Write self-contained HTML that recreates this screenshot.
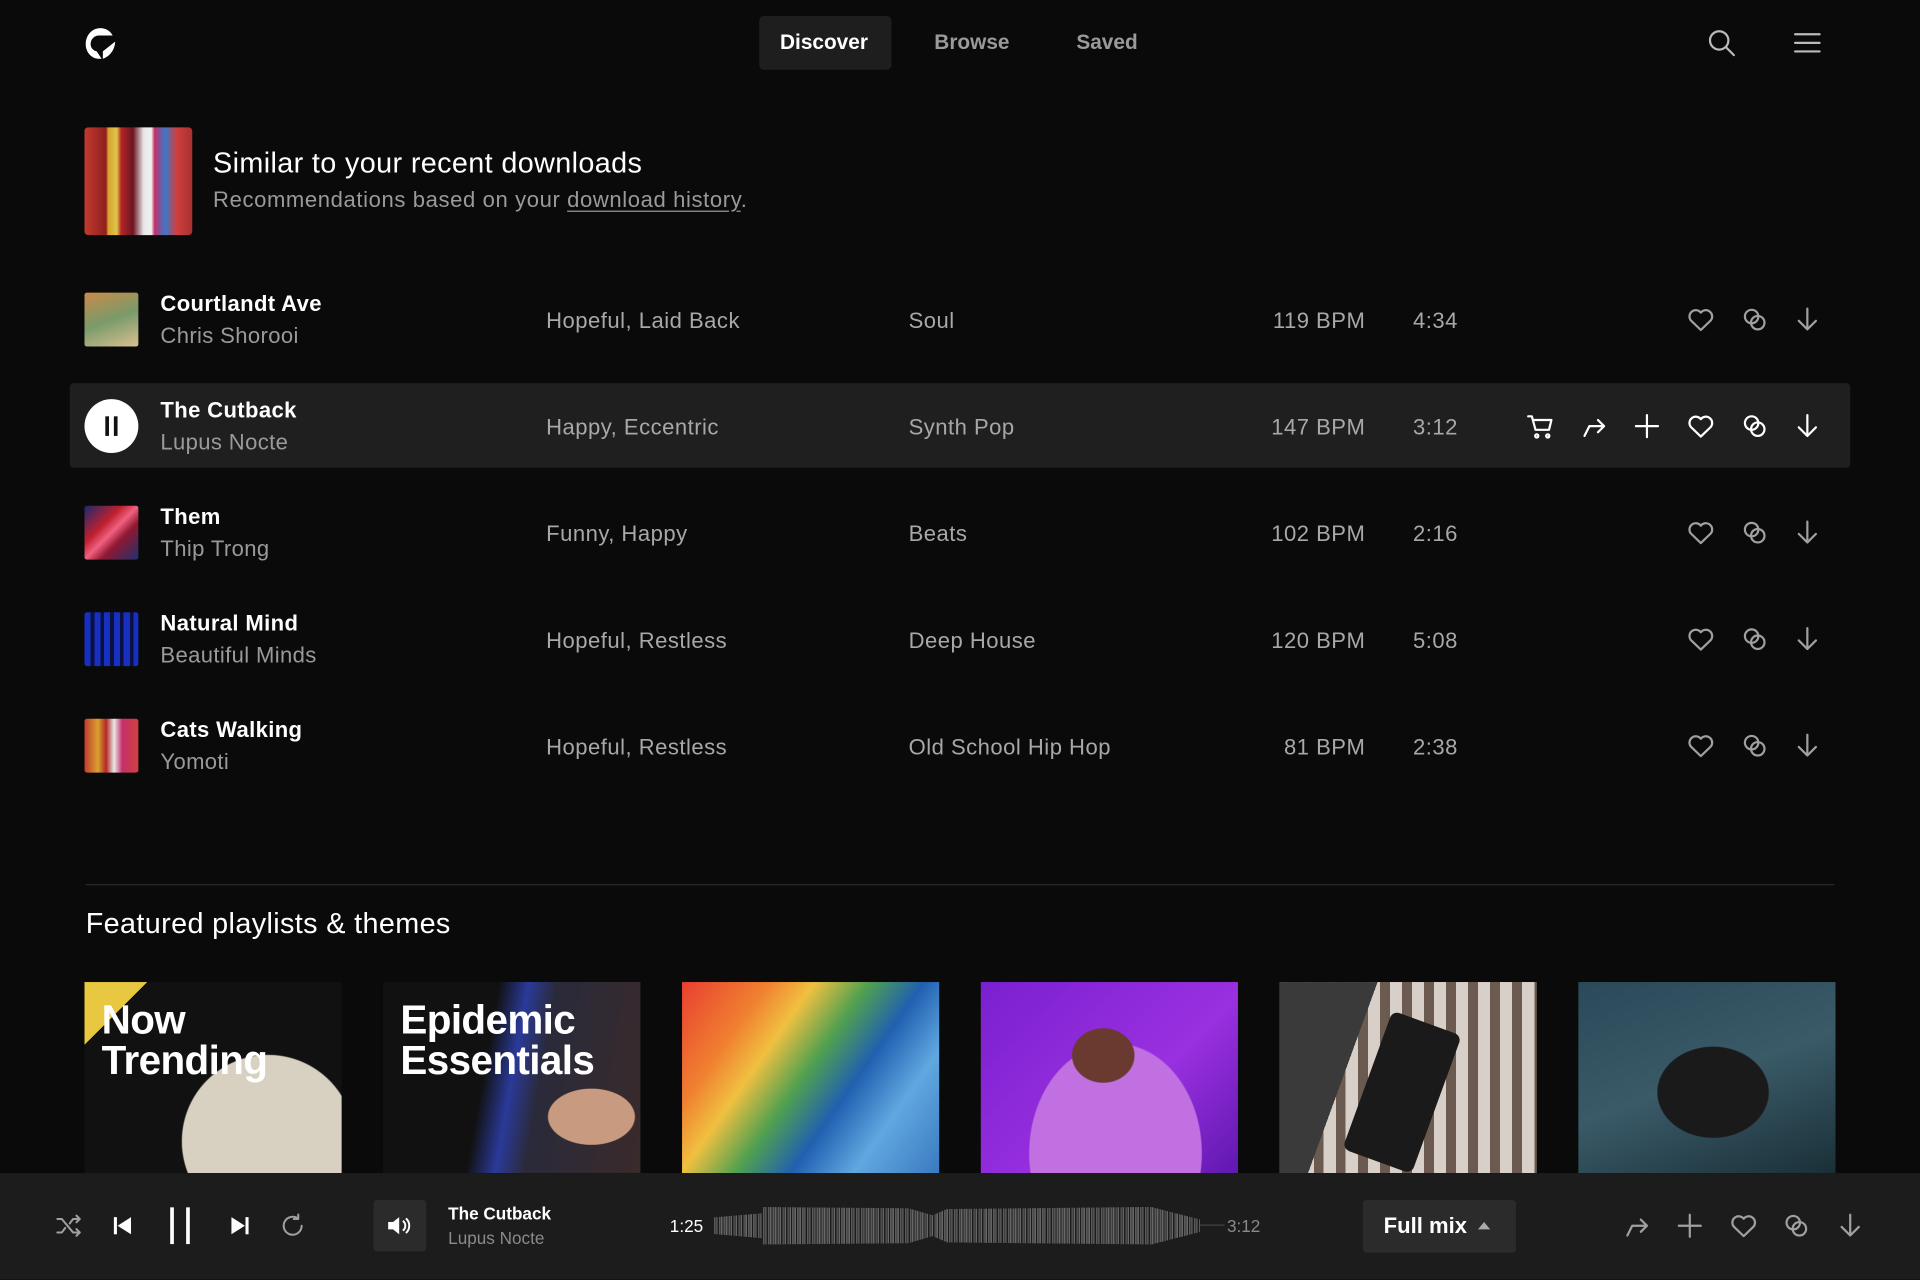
<!DOCTYPE html>
<html><head><meta charset="utf-8"><style>
html,body{margin:0;padding:0;background:#0a0a0a;width:1920px;height:1280px;overflow:hidden}
#w{position:absolute;left:0;top:0;width:1568px;height:1045px;transform:scale(1.22449);transform-origin:0 0;font-family:"Liberation Sans",sans-serif;color:#fff}
.a{position:absolute}
.nav{font-size:17px;font-weight:bold;color:#9a9a9a}
.t1{font-size:18px;font-weight:bold;color:#fff;letter-spacing:0.3px}
.t2{font-size:18px;color:#9a9a9a;letter-spacing:0.3px}
.g{font-size:18px;color:#a8a8a8;letter-spacing:0.4px;margin-top:1px}
svg.i{position:absolute;fill:none;stroke:#a0a0a0;stroke-width:1.8;stroke-linecap:round;stroke-linejoin:round}
.hl svg.i{stroke:#fff}
.thumb{position:absolute;left:69px;width:44px;height:44px;border-radius:2px}
.tile{position:absolute;top:802px;width:210px;height:156px;overflow:hidden}
.tile span{position:absolute;left:14px;top:14px;font-size:33px;font-weight:bold;line-height:33px;color:#fff;letter-spacing:-0.5px}
</style></head><body><div id="w">
<svg style="display:none"><defs>
<symbol id="heart" viewBox="0 0 24 24"><path d="M12 20.5 3.8 12.6A5 5 0 0 1 12 6.3a5 5 0 0 1 8.2 6.3Z"/></symbol>
<symbol id="link" viewBox="0 0 24 24"><circle cx="9.5" cy="9.5" r="5.5"/><circle cx="14.5" cy="14.5" r="5.5"/></symbol>
<symbol id="down" viewBox="0 0 24 24"><path d="M12 3v17M5 13l7 7 7-7"/></symbol>
<symbol id="plus" viewBox="0 0 24 24"><path d="M12 3v18M3 12h18"/></symbol>
<symbol id="share" viewBox="0 0 24 24"><path d="M4 20 8 12h12M15 7l5 5-5 5"/></symbol>
<symbol id="cart" viewBox="0 0 24 24"><path d="M2 4h3l3 11h11l2-8H7"/><circle cx="9" cy="20" r="1.3"/><circle cx="18" cy="20" r="1.3"/></symbol>
</defs></svg>

<!-- header -->
<svg class="a" style="left:69px;top:22px" width="26" height="27" viewBox="0 0 26 27"><path d="M13 1C6 1 1 7 1 14s5 12 11 12h2l-4-6c-3-1-5-3-5-6 0-4 3-7 7-7h11C21 3 17 1 13 1Z M15 20l10-8c0 6-4 12-10 14Z" fill="#fff"/></svg>
<div class="a" style="left:620px;top:13px;width:108px;height:44px;background:#1e1e1e;border-radius:4px"></div>
<div class="a nav" style="left:637px;top:25px;color:#fff">Discover</div>
<div class="a nav" style="left:763px;top:25px">Browse</div>
<div class="a nav" style="left:879px;top:25px">Saved</div>
<svg class="i" style="left:1394px;top:23px;stroke:#bbb" width="24" height="24" viewBox="0 0 24 24"><circle cx="10" cy="10" r="7.5"/><path d="M15.5 15.5 22 22"/></svg>
<svg class="i" style="left:1464px;top:23px;stroke:#bbb" width="24" height="24" viewBox="0 0 24 24"><path d="M2 5h20M2 12h20M2 19h20"/></svg>

<!-- hero -->
<div class="a" style="left:69px;top:104px;width:88px;height:88px;border-radius:3px;background:linear-gradient(90deg,#c23a2e 0,#8f1f1f 20%,#d8a32e 22%,#e0c44a 30%,#b42626 34%,#6a1522 45%,#e8e8e8 55%,#f0f0f0 62%,#c4306a 65%,#3a78c8 75%,#d04040 85%,#a83030 100%)"></div>
<div class="a" style="left:174px;top:120px;font-size:23.5px;color:#fff;letter-spacing:0.3px">Similar to your recent downloads</div>
<div class="a" style="left:174px;top:153px;font-size:18px;color:#9a9a9a;letter-spacing:0.5px">Recommendations based on your <span style="text-decoration:underline;text-underline-offset:3px">download history</span>.</div>

<!-- rows -->
<div class="a hl" style="left:57px;top:313px;width:1454px;height:69px;background:#1f1f1f;border-radius:3px"></div>

<div class="thumb" style="top:239px;background:linear-gradient(160deg,#c98a4a,#7a9a6a 50%,#d8c090)"></div>
<div class="a t1" style="left:131px;top:238px">Courtlandt Ave</div><div class="a t2" style="left:131px;top:264px">Chris Shorooi</div>
<div class="a g" style="left:446px;top:251px">Hopeful, Laid Back</div><div class="a g" style="left:742px;top:251px">Soul</div>
<div class="a g" style="left:1000px;width:115px;text-align:right;top:251px">119 BPM</div><div class="a g" style="left:1154px;top:251px">4:34</div>

<div class="a" style="left:69px;top:326px;width:44px;height:44px;border-radius:50%;background:#fff"></div>
<div class="a" style="left:86px;top:340px;width:3px;height:16px;background:#111"></div><div class="a" style="left:93px;top:340px;width:3px;height:16px;background:#111"></div>
<div class="a t1" style="left:131px;top:325px">The Cutback</div><div class="a t2" style="left:131px;top:351px">Lupus Nocte</div>
<div class="a g" style="left:446px;top:338px">Happy, Eccentric</div><div class="a g" style="left:742px;top:338px">Synth Pop</div>
<div class="a g" style="left:1000px;width:115px;text-align:right;top:338px">147 BPM</div><div class="a g" style="left:1154px;top:338px">3:12</div>

<div class="thumb" style="top:413px;background:linear-gradient(135deg,#1a2a6a,#c02030 35%,#f06080 50%,#901830 65%,#203070)"></div>
<div class="a t1" style="left:131px;top:412px">Them</div><div class="a t2" style="left:131px;top:438px">Thip Trong</div>
<div class="a g" style="left:446px;top:425px">Funny, Happy</div><div class="a g" style="left:742px;top:425px">Beats</div>
<div class="a g" style="left:1000px;width:115px;text-align:right;top:425px">102 BPM</div><div class="a g" style="left:1154px;top:425px">2:16</div>

<div class="thumb" style="top:500px;background:repeating-linear-gradient(90deg,#1830c0 0 5px,#0a1040 5px 8px)"></div>
<div class="a t1" style="left:131px;top:499px">Natural Mind</div><div class="a t2" style="left:131px;top:525px">Beautiful Minds</div>
<div class="a g" style="left:446px;top:512px">Hopeful, Restless</div><div class="a g" style="left:742px;top:512px">Deep House</div>
<div class="a g" style="left:1000px;width:115px;text-align:right;top:512px">120 BPM</div><div class="a g" style="left:1154px;top:512px">5:08</div>

<div class="thumb" style="top:587px;background:linear-gradient(90deg,#c23a2e,#d8a32e 25%,#b42626 40%,#e8e8e8 55%,#c4306a 70%,#d04040)"></div>
<div class="a t1" style="left:131px;top:586px">Cats Walking</div><div class="a t2" style="left:131px;top:612px">Yomoti</div>
<div class="a g" style="left:446px;top:599px">Hopeful, Restless</div><div class="a g" style="left:742px;top:599px">Old School Hip Hop</div>
<div class="a g" style="left:1000px;width:115px;text-align:right;top:599px">81 BPM</div><div class="a g" style="left:1154px;top:599px">2:38</div>

<!-- row icons -->
<svg class="i" style="left:1377px;top:249px" width="24" height="24"><use href="#heart"/></svg>
<svg class="i" style="left:1421px;top:249px" width="24" height="24"><use href="#link"/></svg>
<svg class="i" style="left:1464px;top:249px" width="24" height="24"><use href="#down"/></svg>
<div class="hl">
<svg class="i" style="left:1246px;top:336px" width="24" height="24"><use href="#cart"/></svg>
<svg class="i" style="left:1290px;top:336px" width="24" height="24"><use href="#share"/></svg>
<svg class="i" style="left:1333px;top:336px" width="24" height="24"><use href="#plus"/></svg>
<svg class="i" style="left:1377px;top:336px" width="24" height="24"><use href="#heart"/></svg>
<svg class="i" style="left:1421px;top:336px" width="24" height="24"><use href="#link"/></svg>
<svg class="i" style="left:1464px;top:336px" width="24" height="24"><use href="#down"/></svg>
</div>
<svg class="i" style="left:1377px;top:423px" width="24" height="24"><use href="#heart"/></svg>
<svg class="i" style="left:1421px;top:423px" width="24" height="24"><use href="#link"/></svg>
<svg class="i" style="left:1464px;top:423px" width="24" height="24"><use href="#down"/></svg>
<svg class="i" style="left:1377px;top:510px" width="24" height="24"><use href="#heart"/></svg>
<svg class="i" style="left:1421px;top:510px" width="24" height="24"><use href="#link"/></svg>
<svg class="i" style="left:1464px;top:510px" width="24" height="24"><use href="#down"/></svg>
<svg class="i" style="left:1377px;top:597px" width="24" height="24"><use href="#heart"/></svg>
<svg class="i" style="left:1421px;top:597px" width="24" height="24"><use href="#link"/></svg>
<svg class="i" style="left:1464px;top:597px" width="24" height="24"><use href="#down"/></svg>

<!-- featured -->
<div class="a" style="left:70px;top:722px;width:1428px;height:1px;background:#2c2c2c"></div>
<div class="a" style="left:70px;top:741px;font-size:23.5px;color:#fff;letter-spacing:0.3px">Featured playlists &amp; themes</div>
<div class="tile" style="left:69px;background:radial-gradient(circle at 150px 130px,#d8d0c0 0 70px,transparent 71px),linear-gradient(135deg,#e8c840 0 14%,#111 14%)"><span>Now<br>Trending</span></div>
<div class="tile" style="left:313px;background:radial-gradient(ellipse at 170px 110px,#c89a80 0 35px,transparent 36px),linear-gradient(100deg,#111 0 40%,#2a3a9a 50%,#2a2a3a 60%,#3a2a2a 100%),#111"><span style="top:14px">Epidemic<br>Essentials</span></div>
<div class="tile" style="left:557px;background:linear-gradient(125deg,#e84030 0,#f08030 22%,#f0c040 34%,#50a050 48%,#2060b0 62%,#60a8e0 78%,#3a7ac0 100%)"></div>
<div class="tile" style="left:801px;background:radial-gradient(ellipse at 100px 60px,#6a3a30 0 25px,transparent 26px),radial-gradient(ellipse at 110px 140px,#c070e0 0 70px,transparent 71px),linear-gradient(135deg,#7a20d0,#9a30e0 60%,#6018b0)"></div>
<div class="tile" style="left:1045px;background:linear-gradient(110deg,#3a3a3a 0 30%,transparent 30%),repeating-linear-gradient(90deg,#d8d0c8 0 10px,#6a5a50 10px 18px),#555"><div class="a" style="left:70px;top:30px;width:60px;height:120px;background:#1a1a1a;transform:rotate(20deg);border-radius:6px"></div></div>
<div class="tile" style="left:1289px;background:radial-gradient(ellipse at 110px 90px,#1a1a1a 0 45px,transparent 46px),linear-gradient(160deg,#2a4a5a,#3a5a68 50%,#1a3038)"></div>

<!-- player -->
<div class="a" style="left:0;top:958px;width:1568px;height:87px;background:#1c1c1c"></div>
<svg class="i" style="left:45px;top:990px" width="22" height="22" viewBox="0 0 24 24"><path d="M2 6h4l10 12h6M2 18h4l3-4M13 10l3-4h6M19 3l3 3-3 3M19 15l3 3-3 3"/></svg>
<svg class="a" style="left:92px;top:993px" width="16" height="16" viewBox="0 0 16 16"><rect x="1" y="1" width="2.5" height="14" fill="#fff"/><path d="M15 1v14L4 8Z" fill="#fff"/></svg>
<div class="a" style="left:139px;top:986px;width:3px;height:30px;background:#fff"></div><div class="a" style="left:152px;top:986px;width:3px;height:30px;background:#fff"></div>
<svg class="a" style="left:188px;top:993px" width="16" height="16" viewBox="0 0 16 16"><rect x="12.5" y="1" width="2.5" height="14" fill="#fff"/><path d="M1 1v14L12 8Z" fill="#fff"/></svg>
<svg class="i" style="left:228px;top:990px" width="22" height="22" viewBox="0 0 24 24"><path d="M20 12a8 8 0 1 1-3-6.2M17 2v4h-4"/></svg>
<div class="a" style="left:305px;top:980px;width:43px;height:42px;background:#2b2b2b;border-radius:3px"></div>
<svg class="a" style="left:316px;top:992px" width="20" height="18" viewBox="0 0 20 18"><path d="M1 6h4l5-4v14l-5-4H1Z" fill="#fff"/><path d="M13 5a5 5 0 0 1 0 8M15.5 3a8 8 0 0 1 0 12" stroke="#fff" stroke-width="1.6" fill="none"/></svg>
<div class="a" style="left:366px;top:983px;font-size:14px;font-weight:bold;color:#fff">The Cutback</div>
<div class="a" style="left:366px;top:1003px;font-size:14px;color:#8a8a8a">Lupus Nocte</div>
<div class="a" style="left:547px;top:993px;font-size:14px;color:#fff">1:25</div>
<div class="a" style="left:583px;top:984px;width:397px;height:34px;background:repeating-linear-gradient(90deg,#5a5a5a 0 1px,#3e3e3e 1px 2px,#666 2px 3px,#1c1c1c 3px 4px);clip-path:polygon(0 30%,10% 20%,10% 5%,40% 8%,45% 25%,48% 10%,90% 5%,100% 35%,100% 65%,90% 95%,48% 90%,45% 75%,40% 92%,10% 95%,10% 80%,0 70%)"></div>
<div class="a" style="left:980px;top:1000px;width:20px;height:1px;background:#444"></div>
<div class="a" style="left:1002px;top:993px;font-size:14px;color:#8a8a8a">3:12</div>
<div class="a" style="left:1113px;top:980px;width:125px;height:43px;background:#2b2b2b;border-radius:3px"></div>
<div class="a" style="left:1130px;top:991px;font-size:18px;font-weight:bold;color:#fff">Full mix</div>
<div class="a" style="left:1207px;top:998px;width:0;height:0;border-left:5px solid transparent;border-right:5px solid transparent;border-bottom:6px solid #aaa"></div>
<svg class="i" style="left:1325px;top:989px" width="24" height="24"><use href="#share"/></svg>
<svg class="i" style="left:1368px;top:989px" width="24" height="24"><use href="#plus"/></svg>
<svg class="i" style="left:1412px;top:989px" width="24" height="24"><use href="#heart"/></svg>
<svg class="i" style="left:1455px;top:989px" width="24" height="24"><use href="#link"/></svg>
<svg class="i" style="left:1499px;top:989px" width="24" height="24"><use href="#down"/></svg>
</div></body></html>
